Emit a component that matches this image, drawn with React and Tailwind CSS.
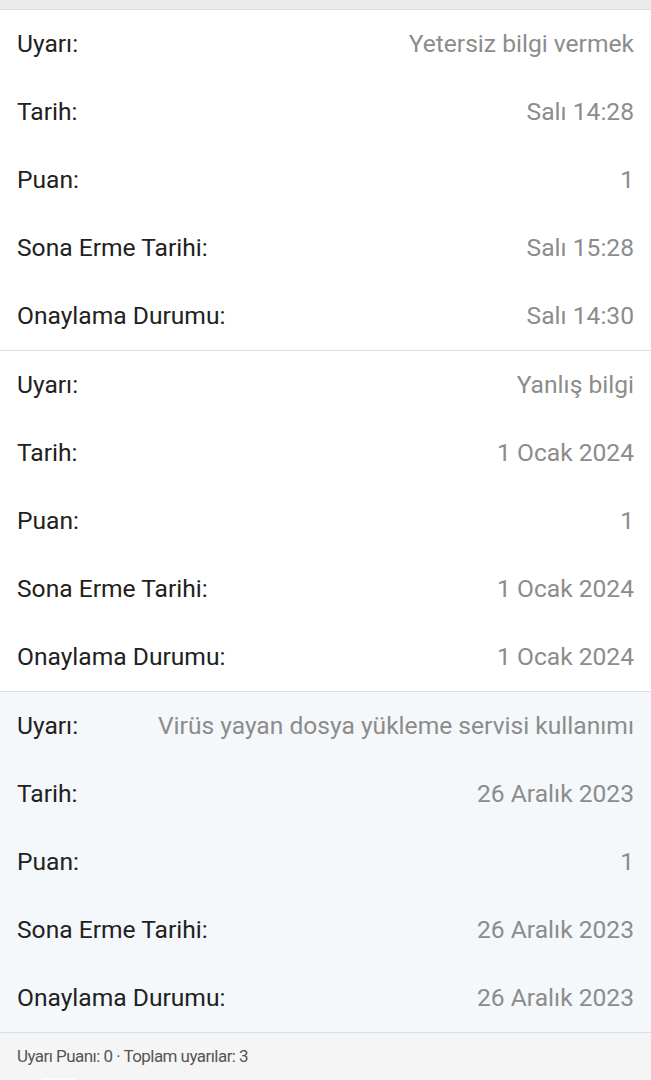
import React from 'react';

const warnings = [
  {
    reason: 'Yetersiz bilgi vermek',
    date: 'Salı 14:28',
    points: '1',
    expires: 'Salı 15:28',
    approved: 'Salı 14:30',
    highlight: false,
  },
  {
    reason: 'Yanlış bilgi',
    date: '1 Ocak 2024',
    points: '1',
    expires: '1 Ocak 2024',
    approved: '1 Ocak 2024',
    highlight: false,
  },
  {
    reason: 'Virüs yayan dosya yükleme servisi kullanımı',
    date: '26 Aralık 2023',
    points: '1',
    expires: '26 Aralık 2023',
    approved: '26 Aralık 2023',
    highlight: true,
  },
];

function Row({ label, value }) {
  return (
    <div className="h-[68px] flex items-center justify-between px-[17px] gap-4">
      <span className="text-[24.6px] text-[#212121] whitespace-nowrap">{label}</span>
      <span className="text-[24.6px] text-[#8c8c8c] whitespace-nowrap text-right">{value}</span>
    </div>
  );
}

export default function App() {
  return (
    <div className="w-[651px] h-[1080px] overflow-hidden bg-white" style={{ fontFamily: 'Roboto, "Noto Sans", sans-serif' }}>
      {/* top strip */}
      <div className="h-[10px] bg-[#ebebeb] border-b border-[#dadada]" />

      {warnings.map((w, i) => (
        <div
          key={i}
          className={`border-b border-[#dedede] ${w.highlight ? 'bg-[#f4f8fb]' : 'bg-white'}`}
        >
          <Row label="Uyarı:" value={w.reason} />
          <Row label="Tarih:" value={w.date} />
          <Row label="Puan:" value={w.points} />
          <Row label="Sona Erme Tarihi:" value={w.expires} />
          <Row label="Onaylama Durumu:" value={w.approved} />
        </div>
      ))}

      {/* footer */}
      <div className="bg-[#f5f5f5] px-[17px] pt-[11px] h-[60px] relative">
        <p className="text-[17px] leading-[24px] tracking-[-0.55px] text-[#555555]">
          Uyarı Puanı: 0 · Toplam uyarılar: 3
        </p>
        <div className="absolute left-[40px] top-[45px] w-[36px] h-[6px] bg-white rounded-t-sm" />
      </div>
    </div>
  );
}
